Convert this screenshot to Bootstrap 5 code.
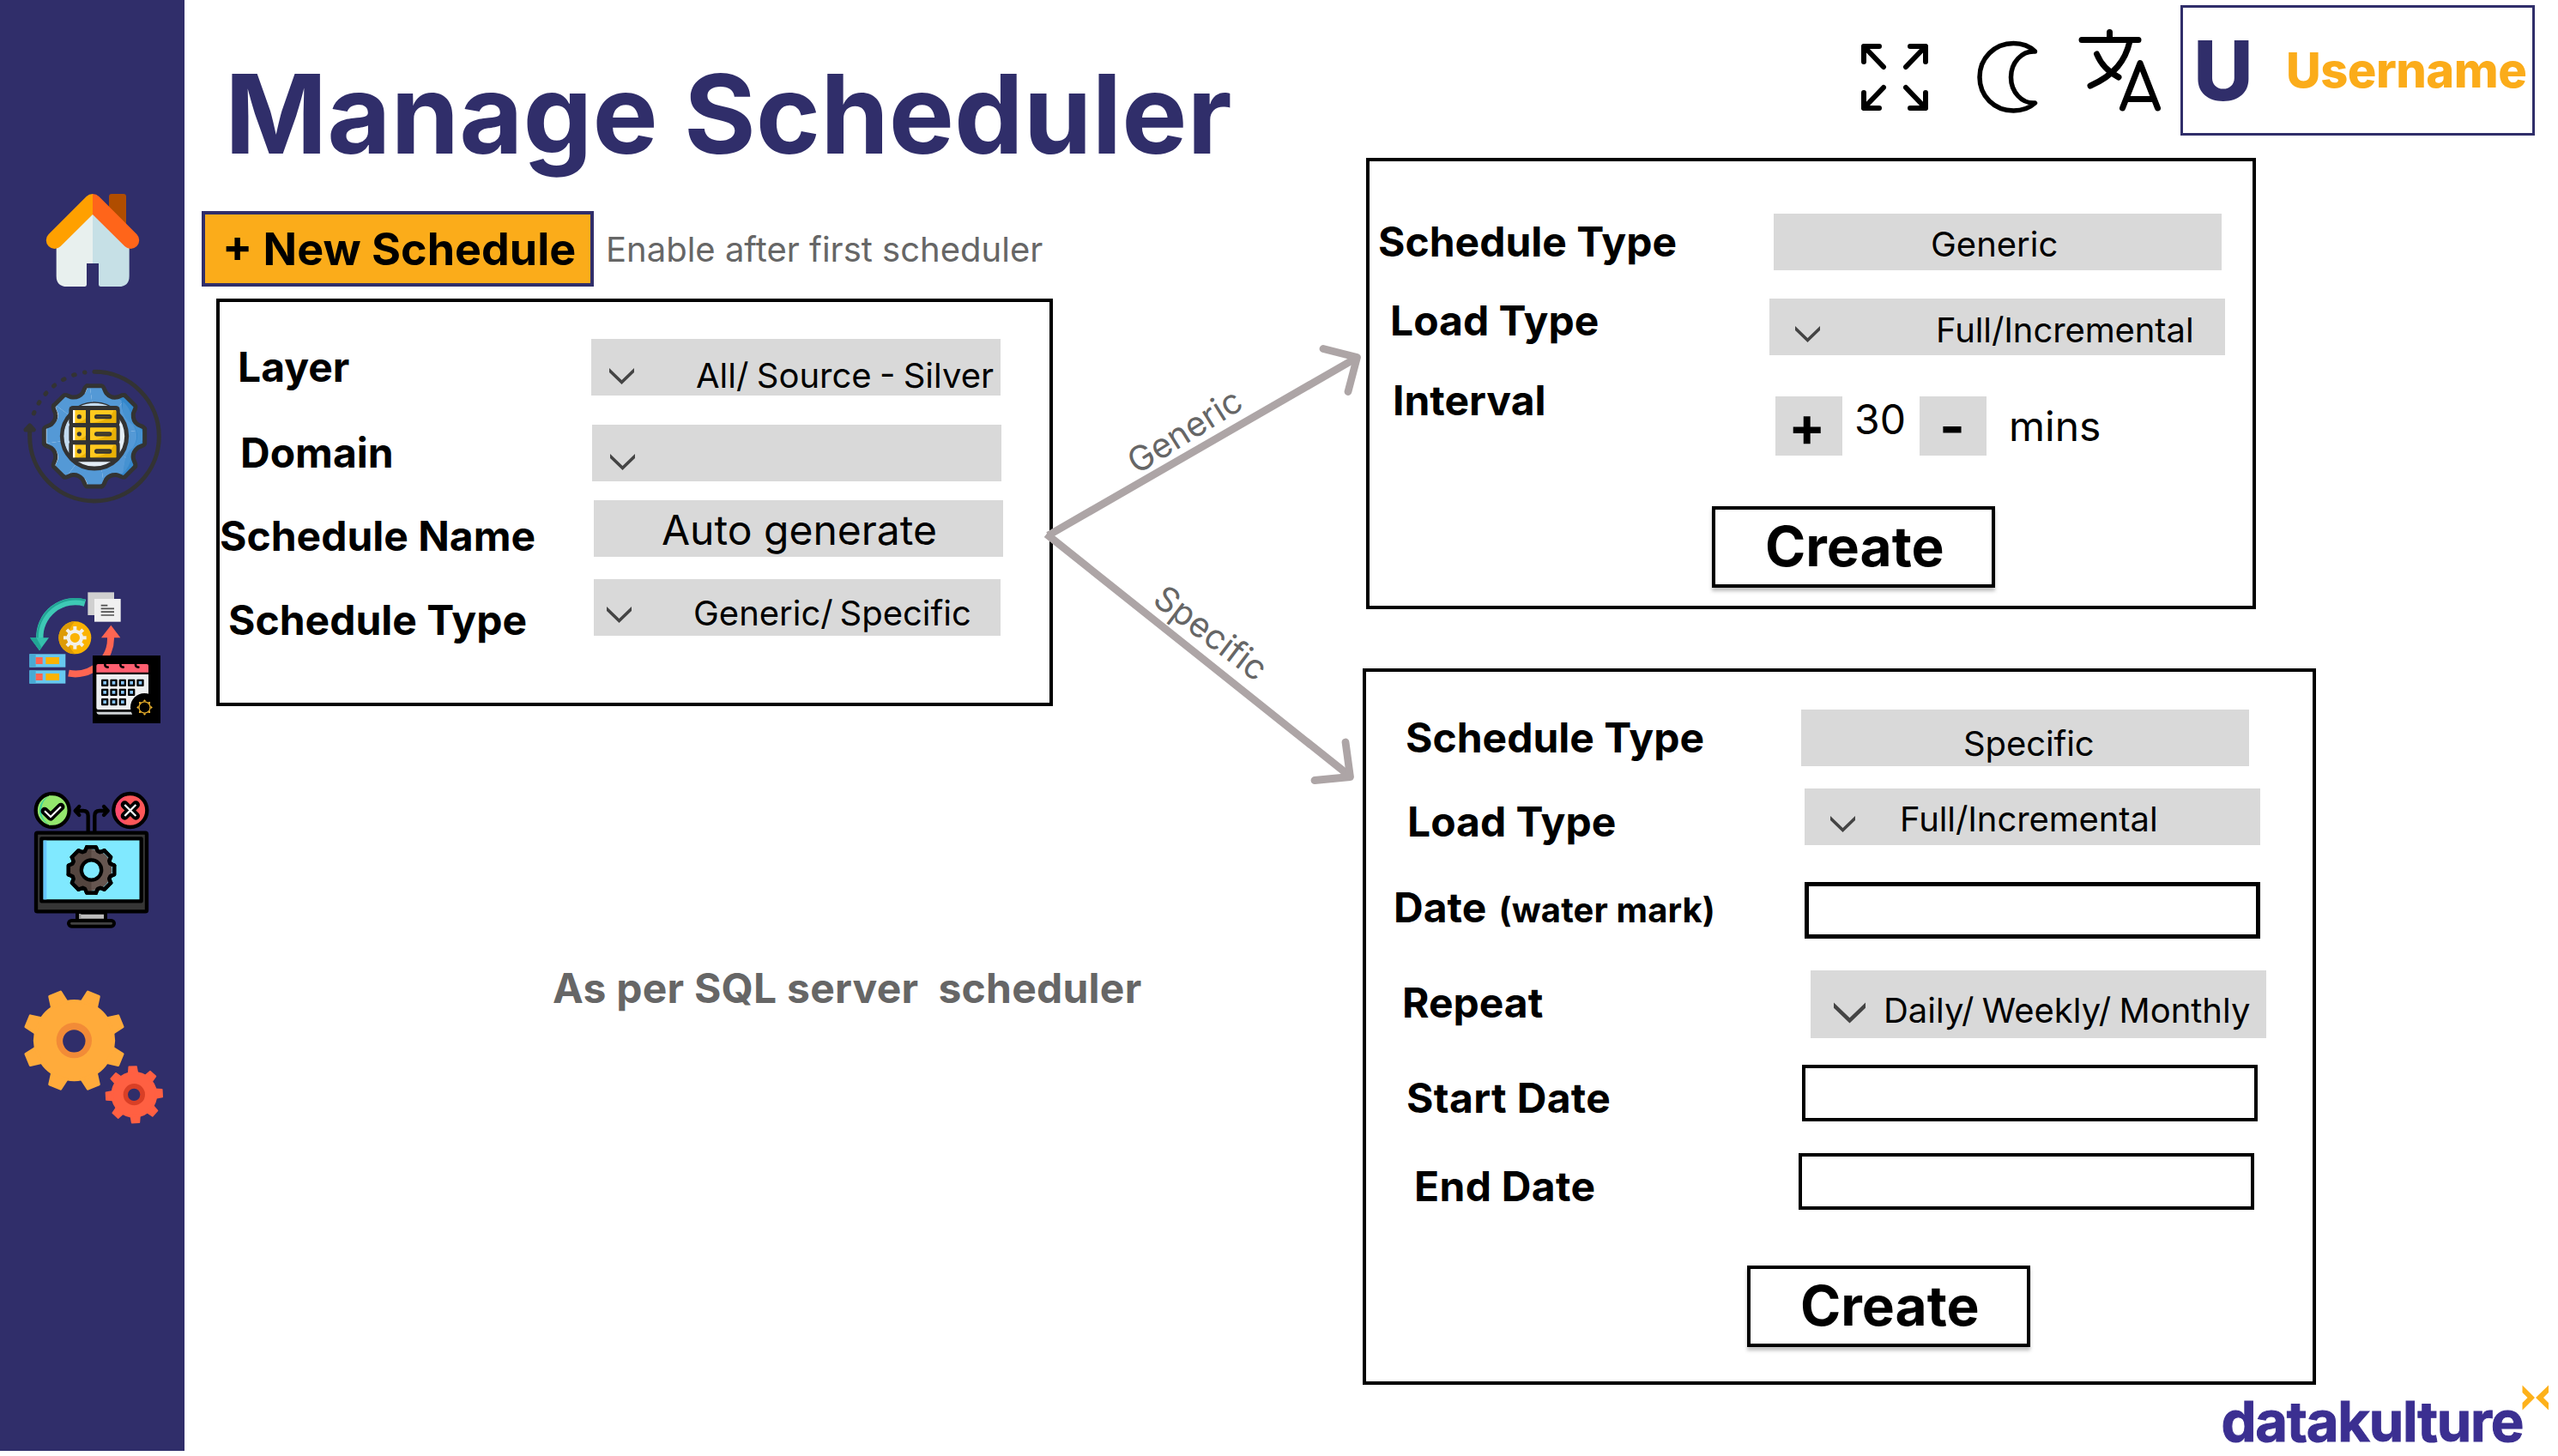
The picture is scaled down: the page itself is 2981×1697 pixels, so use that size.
<!DOCTYPE html>
<html lang="en">
<head>
<meta charset="utf-8">
<meta name="viewport" content="width=device-width, initial-scale=1">
<title>Manage Scheduler</title>
<link href="https://cdn.jsdelivr.net/npm/bootstrap@5.3.0/dist/css/bootstrap.min.css" rel="stylesheet">
<style>
:root{--navy:#302e6a;--amber:#fbac1a;--ash:#d9d9d9;--ink-soft:#666}
body{font-family:Inter,"Liberation Sans",sans-serif;color:#000;background:#fff;overflow:hidden;text-rendering:optimizeLegibility}
.shell{width:2981px;height:1697px}
svg{display:block;flex:none}

/* sidebar */
.side{width:215px;height:1691px;background:var(--navy);padding-top:220px}
.side .gap-a{margin-top:85px}.side .gap-b{margin-top:92px}.side .gap-c{margin-top:71px}.side .gap-d{margin-top:64px}

/* type sizes */
.t128{font-size:128px;line-height:129px}
.t64{font-size:64px;line-height:65px}
.t52{font-size:52px;line-height:53px}
.t48{font-size:48px;line-height:49px}
.t40{font-size:40px;line-height:41px}
.soft{color:var(--ink-soft)}

/* left column */
.col-left{width:1373px;padding-top:68px}
.page-title{color:var(--navy);padding-left:47px}
.actions{margin-top:49px;margin-left:20px}
.btn-new{width:457px;height:88px;border:4px solid var(--navy);background:var(--amber);color:#000;padding:14px 0 0 20px}
.hint{margin:24px 0 0 14px}
.note{margin:304px 0 0 429px;white-space:pre;letter-spacing:.23px}

/* right column */
.col-right{width:1393px}
.topbar{height:158px;padding-left:581px}
.ic-full{margin-top:51px}.ic-moon{margin:47px 0 0 57px}.ic-lang{margin:33px 0 0 47px}
.user{width:413px;height:152px;margin:6px 0 0 22px;border:3px solid var(--navy)}
.user-initial{font-size:96px;line-height:96px;width:108px;color:var(--navy);margin:25px 0 0 12px;font-weight:800}
.user-name{font-size:56px;line-height:56px;color:var(--amber);margin:45px 0 0 0;font-weight:800;letter-spacing:-.5px}
.brand{margin:0 0 0 990px}

/* panels */
.panel{border:4px solid #000;background:#fff}
.p-main{width:975px;height:475px;margin:14px 0 0 37px;padding-top:43px}
.p-generic{width:1037px;height:526px;margin:26px 0 0 4px;padding-top:61px}
.p-specific{width:1111px;height:835px;margin-top:69px;padding-top:44px}
.line{height:var(--h)}
.lbl{width:var(--lw);padding-left:var(--lx);margin-top:var(--ly);letter-spacing:var(--ls,0)}
.ctl{width:var(--cw);height:var(--ch,66px);background:var(--ash)}
.ctl svg{margin:var(--vy) 0 0 var(--vx)}
.ctl span{margin:var(--ty) 0 0 var(--tx);word-spacing:var(--ws,0);letter-spacing:var(--vs,0)}
.field{width:531px;height:66px;border:4px solid #000;background:#fff;border-radius:0;padding:0}
.field-strong{border-width:5px}
.step{width:78px;height:69px;background:var(--ash);border:0;padding:2px 0 0}
.btn-create{width:330px;height:95px;border:4px solid #000;background:#fff;padding:10px 0 0 58px;box-shadow:0 4px 4px rgba(0,0,0,.25)}

.a1{--h:100px;--lw:433px;--lx:21px;--ly:8px;--cw:477px;--vx:21px;--vy:34px;--tx:72px;--ty:22px;--ws:-1.9px}
.a2{--h:88px;--lw:434px;--lx:24px;--ly:8px;--cw:477px;--vx:21px;--vy:34px}
.a3{--h:92px;--lw:436px;--lx:0px;--ly:17px;--cw:477px;--tx:79px;--ty:10px}
.a4{--h:66px;--lw:436px;--lx:10px;--ly:23px;--cw:474px;--vx:15px;--vy:32px;--tx:72px;--ty:19px;--ws:-3.5px}
.b1{--h:99px;--lw:471px;--lx:10px;--ly:8px;--cw:522px;--tx:183px;--ty:15px}
.b2{--h:114px;--lw:466px;--lx:24px;--ly:1px;--cw:531px;--vx:30px;--vy:32px;--tx:135px;--ty:16px;--vs:-.1px}
.b3{--h:128px;--lw:473px;--lx:27px;--ly:-20px}
.b4{padding-left:399px}
.plus{padding-left:15px}.minus{padding-left:23px}
.count{width:76px;margin:2px 0 0 14px}
.unit{margin:10px 0 0 26px}
.c1{--h:92px;--lw:507px;--lx:46px;--ly:8px;--cw:522px;--tx:189px;--ty:19px;--vs:-.1px}
.c2{--h:109px;--lw:511px;--lx:48px;--ly:14px;--cw:531px;--vx:30px;--vy:32px;--tx:52px;--ty:15px;--vs:-.1px}
.c3{--h:103px;--lw:511px;--lx:32px;--ly:5px}
.c4{--h:110px;--lw:518px;--lx:42px;--ly:13px;--cw:531px;--ch:79px;--vx:27px;--vy:37px;--tx:21px;--ty:26px;--ws:-2px}
.c5{--h:103px;--lw:508px;--lx:47px;--ly:14px;--ls:.35px}
.c6{--h:131px;--lw:504px;--lx:56px;--ly:14px;--ls:.3px}
.c7{padding-left:444px}
.aside-text{font-size:40px;padding-left:3px;letter-spacing:.12px}

/* connectors drawn over the panels */
.links{left:1200px;top:380px}
.links text{font-size:40px;fill:var(--ink-soft)}
</style>
<script src="https://cdn.jsdelivr.net/npm/bootstrap@5.3.0/dist/js/bootstrap.bundle.min.js"></script>
</head>
<body>
<div class="shell d-flex align-items-start position-relative">

<svg width="0" height="0" class="position-absolute">
  <defs>
    <path id="cogEdge" d="M-25 -176H25C34 -176 35 -158 42 -150C50 -141 64 -134 76.5 -135.7C88 -137 98 -148 106.8 -142.1"/>
    <path id="cogFill" d="M-25 -176H25C34 -176 35 -158 42 -150C50 -141 64 -134 76.5 -135.7C88 -137 98 -148 106.8 -142.1L0 0Z"/>
    <g id="cogE4"><use href="#cogEdge"/><use href="#cogEdge" transform="rotate(45)"/><use href="#cogEdge" transform="rotate(90)"/><use href="#cogEdge" transform="rotate(135)"/></g>
    <g id="cogF4"><use href="#cogFill"/><use href="#cogFill" transform="rotate(45)"/><use href="#cogFill" transform="rotate(90)"/><use href="#cogFill" transform="rotate(135)"/></g>
    <g id="cogAll"><circle r="120"/><use href="#cogF4"/><use href="#cogF4" transform="rotate(180)"/></g>
    <clipPath id="cogClip"><circle r="120"/><use href="#cogFill"/><use href="#cogFill" transform="rotate(45)"/><use href="#cogFill" transform="rotate(90)"/><use href="#cogFill" transform="rotate(135)"/><use href="#cogFill" transform="rotate(180)"/><use href="#cogFill" transform="rotate(225)"/><use href="#cogFill" transform="rotate(270)"/><use href="#cogFill" transform="rotate(315)"/></clipPath>
    <path id="mEdge" d="M-16 -80H16L22 -66L30 -62L45.3 -67.9"/>
    <g id="mE4"><use href="#mEdge"/><use href="#mEdge" transform="rotate(45)"/><use href="#mEdge" transform="rotate(90)"/><use href="#mEdge" transform="rotate(135)"/></g>
    <path id="bTooth" d="M-21 -175H21L28 -136H-28Z"/>
    <g id="bT4"><use href="#bTooth"/><use href="#bTooth" transform="rotate(45)"/><use href="#bTooth" transform="rotate(90)"/><use href="#bTooth" transform="rotate(135)"/></g>
    <path id="sTooth" d="M-13 -98H13L16 -74H-16Z"/>
    <g id="sT4"><use href="#sTooth"/><use href="#sTooth" transform="rotate(45)"/><use href="#sTooth" transform="rotate(90)"/><use href="#sTooth" transform="rotate(135)"/></g>
    <path id="wTooth" d="M-6 -40H6V-25H-6Z"/>
    <path id="ray" d="M-6 -21L0 -28L6 -21Z"/>
    <symbol id="chev" viewBox="0 0 29 19"><path fill="#444" d="M0 0L14.5 14L29 0V5L14.5 19L0 5Z"/></symbol>
    <g id="cell"><rect width="25" height="25" rx="3"/><rect x="7" y="7" width="11" height="11" fill="#86c5fb"/></g>
    <g id="rack"><rect width="126" height="46" fill="#67c8ee"/><rect width="22" height="46" fill="#49aad4"/><rect x="22" y="11" width="24" height="24" fill="#fe6552"/><rect x="57" y="11" width="47" height="24" fill="#fbb302"/></g>
    <g id="blade"><rect x="241" y="819" width="178" height="72" rx="14" fill="#333"/><rect x="255" y="834" width="45" height="45" fill="#ffc91f"/><path d="M255 834h7v45h-7z" fill="#fff"/><path d="M300 862V879H262Q285 878 300 862Z" fill="#e9b106"/><rect x="315" y="834" width="91" height="45" rx="2" fill="#ffc91f"/><path d="M406 838V879H315Q385 873 398 834Z" fill="#e9b106"/><circle cx="277" cy="857" r="8" fill="#333"/><rect x="330" y="849" width="61" height="16" rx="8" fill="#333"/><path d="M338 857H383" stroke="#7d6314" stroke-width="2"/></g>
  </defs>
</svg>

<nav class="side d-flex flex-column flex-shrink-0">
  <a href="#" aria-label="Home">
    <svg width="215" height="120" viewBox="0 60 645 360">
      <rect x="381" y="78" width="60" height="130" rx="9" fill="#b04d00"/>
      <path d="M324 140L197 260V365Q197 402 234 402H296Q303 402 303 395V321H324Z" fill="#e8f0ee"/>
      <path d="M324 140L452 260V365Q452 402 415 402H352Q345 402 345 395V321H324Z" fill="#c6e0e6"/>
      <path d="M324 78Q311 78 302 87L170 219A29 29 0 0 0 212 261L324 150Z" fill="#ffa000"/>
      <path d="M324 78Q337 78 346 87L478 219A29 29 0 0 1 436 261L324 150Z" fill="#ff651a"/>
    </svg>
  </a>
  <a href="#" class="gap-a" aria-label="Data services">
    <svg width="215" height="168" viewBox="0 675 645 504">
      <g fill="none" stroke="#333" stroke-width="15" stroke-linecap="round" stroke-linejoin="round">
        <path d="M330 700A226 226 0 1 1 104 926V890"/>
        <path d="M90 903L104 888L118 903Z" fill="#333"/>
        <path d="M118 846A226 226 0 0 1 297 702" stroke-dasharray="5 34.9"/>
      </g>
      <g transform="translate(330 925)">
        <g clip-path="url(#cogClip)">
          <rect x="-190" y="-190" width="380" height="380" fill="#fff"/>
          <use href="#cogAll" x="9" fill="#5499d6"/>
          <path d="M15 -190C25 -150 70 -140 95 -125C95 -80 110 -55 135 -40Q160 0 135 40C105 60 108 90 100 130C60 140 35 140 20 190H190V-190Z" fill="#3487cb"/>
          <path d="M100 -120C95 -80 105 -55 135 -40Q165 0 135 40C105 60 108 90 100 130C140 90 120 60 150 40Q190 0 150 -40C125 -60 135 -90 100 -120Z" fill="#5499d6" opacity=".6"/>
        </g>
        <g fill="none" stroke="#333" stroke-width="15" stroke-linejoin="round" stroke-linecap="round"><use href="#cogE4"/><use href="#cogE4" transform="rotate(180)"/></g>
        <circle r="113" fill="#e3edf6" stroke="#333" stroke-width="15"/>
        <path d="M-88 -60A106 106 0 0 0 -88 60L-80 40V-60Z" fill="#c3dbf0"/>
        <path d="M-52 -101Q0 -124 52 -101Q0 -112 -52 -101Z" fill="#c3dbf0" stroke="#c3dbf0" stroke-width="6"/>
      </g>
      <use href="#blade"/><use href="#blade" y="60.5"/><use href="#blade" y="121"/>
      <path d="M250 1008H410" stroke="#333" stroke-width="14"/>
    </svg>
  </a>
  <a href="#" class="gap-b" aria-label="Scheduler">
    <svg width="215" height="164" viewBox="0 75 645 492">
      <path d="M297 128A124 124 0 0 0 139 252" fill="none" stroke="#3ec9b5" stroke-width="25"/>
      <path d="M297 119A133 133 0 0 0 131 252" fill="none" stroke="#22a595" stroke-width="7"/>
      <path d="M105 250H171L138 295Z" fill="#35bfac"/><path d="M105 250H127L146 284L138 295Z" fill="#22a595"/>
      <circle cx="262" cy="250" r="57" fill="#fbb302"/>
      <path d="M262 193A57 57 0 0 0 262 307A80 80 0 0 1 262 193Z" fill="#dd9b06"/>
      <g transform="translate(262 250)" fill="#f2f0ea">
        <circle r="23" fill="none" stroke="#f2f0ea" stroke-width="12"/>
        <use href="#wTooth"/><use href="#wTooth" transform="rotate(45)"/><use href="#wTooth" transform="rotate(90)"/><use href="#wTooth" transform="rotate(135)"/><use href="#wTooth" transform="rotate(180)"/><use href="#wTooth" transform="rotate(225)"/><use href="#wTooth" transform="rotate(270)"/><use href="#wTooth" transform="rotate(315)"/>
      </g>
      <rect x="307" y="91" width="92" height="80" fill="#d0d0d0"/><rect x="330" y="114" width="92" height="80" fill="#f0f0f0"/>
      <path d="M353 137H376M353 148H399M353 159.500H399M353 171H399" stroke="#505050" stroke-width="5"/>
      <path d="M240 374A124 124 0 0 0 387 248" fill="none" stroke="#fe6552" stroke-width="24"/>
      <path d="M354 250H421L388 206Z" fill="#fe6552"/>
      <use href="#rack" x="103" y="307"/><use href="#rack" x="103" y="364"/>
      <rect x="324" y="312" width="237" height="237"/>
      <path d="M337 371V348Q337 342 343 342H513Q519 342 519 348V371Z" fill="#ff5f70"/>
      <path d="M337 378H519V501H343Q337 501 337 495Z" fill="#eceff1"/>
      <path d="M337 509H462V518H345Q339 518 337 509Z" fill="#cfd3d6"/>
      <path d="M367 341Q366 353 377 353M421 341Q420 353 431 353M474 341Q473 353 484 353" fill="none" stroke="#000" stroke-width="8" stroke-linecap="round"/>
      <use href="#cell" x="354" y="395"/><use href="#cell" x="385" y="395"/><use href="#cell" x="416" y="395"/><use href="#cell" x="447" y="395"/><use href="#cell" x="478" y="395"/>
      <use href="#cell" x="354" y="428"/><use href="#cell" x="385" y="428"/><use href="#cell" x="416" y="428"/><use href="#cell" x="447" y="428"/>
      <use href="#cell" x="354" y="462"/><use href="#cell" x="385" y="462"/><use href="#cell" x="416" y="462"/>
      <circle cx="505" cy="493" r="49"/>
      <g transform="translate(505.500 493.500)" fill="#f6b92f">
        <circle r="19.500" fill="none" stroke="#f6b92f" stroke-width="3.500"/>
        <use href="#ray"/><use href="#ray" transform="rotate(45)"/><use href="#ray" transform="rotate(90)"/><use href="#ray" transform="rotate(135)"/><use href="#ray" transform="rotate(180)"/><use href="#ray" transform="rotate(225)"/><use href="#ray" transform="rotate(270)"/><use href="#ray" transform="rotate(315)"/>
      </g>
    </svg>
  </a>
  <a href="#" class="gap-c" aria-label="Job status">
    <svg width="215" height="166" viewBox="0 780 645 498">
      <g stroke="#000" stroke-width="13" stroke-linecap="round" stroke-linejoin="round">
        <circle cx="183.500" cy="853.500" r="58.500" fill="#94e76d"/>
        <path d="M183 802A52 52 0 0 0 183 905Q145 895 145 853Q145 812 183 802Z" fill="#3bd39a" stroke="none"/>
        <path d="M172 802A70 70 0 0 0 172 905L200 900V806Z" fill="#94e76d" stroke="none"/>
        <circle cx="455.500" cy="853.500" r="58.500" fill="#ff5759"/>
        <path d="M440 804A52 52 0 0 0 440 903Q400 853 440 804Z" fill="#ff4a6e" stroke="none"/>
        <path d="M156 856L177 876L213 841" fill="none" stroke-width="27"/>
        <path d="M156 856L177 876L213 841" fill="none" stroke="#fff" stroke-width="6" stroke-linecap="butt" stroke-linejoin="miter"/>
        <path d="M436 834L475 873M475 834L436 873" fill="none" stroke-width="28"/>
        <path d="M436 834L475 873M475 834L436 873" stroke="#fff" stroke-width="7" stroke-linecap="butt"/>
        <path d="M308 928V872Q308 855 291 855H264M277 840L263 855L277 870M331 928V872Q331 855 348 855H376M363 840L377 855L363 870" fill="none"/>
        <rect x="126" y="932" width="387" height="275" rx="5" fill="#363636"/>
        <rect x="145" y="952" width="349" height="219" fill="#80e9ff"/>
        <path d="M152 959H163V1165H152Z" fill="#67c6ff" stroke="none"/>
        <g transform="translate(319.500 1062)">
          <circle r="72" fill="#665650" stroke="none"/>
          <g fill="#665650"><use href="#mE4"/><use href="#mE4" transform="rotate(180)"/></g>
          <circle r="66" fill="#665650" stroke="none"/>
          <path d="M0 -78V78A78 78 0 0 1 -16 74L-45 62L-70 30L-78 12V-12L-66 -24L-64 -45L-45 -64L-16 -76Z" fill="#54453f" stroke="none"/>
          <g fill="none"><use href="#mE4"/><use href="#mE4" transform="rotate(180)"/></g>
          <circle r="35" fill="#80e9ff"/>
        </g>
        <path d="M270 1211H369V1238H270Z" fill="#bdbdbd" stroke-width="12"/>
        <path d="M276 1215H283V1232H276Z" fill="#9a9a9a" stroke="none"/>
        <rect x="240" y="1239" width="159" height="20" rx="10" fill="#424242" stroke-width="12"/>
      </g>
    </svg>
  </a>
  <a href="#" class="gap-d" aria-label="Settings">
    <svg width="215" height="164" viewBox="0 150 645 492">
      <g transform="translate(259.500 338) rotate(22.500)" fill="#ffab3b" stroke="#ffab3b" stroke-width="9" stroke-linejoin="round"><circle r="138"/><use href="#bT4"/><use href="#bT4" transform="rotate(180)"/></g>
      <circle cx="259" cy="338" r="62" fill="#f28b37"/><circle cx="259" cy="340" r="39.500" fill="#302e6a"/>
      <g transform="translate(469 527.500) rotate(-3)" fill="#ff6042" stroke="#ff6042" stroke-width="5" stroke-linejoin="round"><circle r="78"/><use href="#sT4"/><use href="#sT4" transform="rotate(180)"/></g>
      <circle cx="469" cy="527" r="38" fill="#d93f26"/><circle cx="468.500" cy="527.500" r="21.500" fill="#302e6a"/>
    </svg>
  </a>
</nav>

<main class="d-flex align-items-start">
  <section class="col-left flex-shrink-0">
    <h1 class="page-title t128 fw-bold m-0 text-nowrap">Manage Scheduler</h1>
    <div class="actions d-flex align-items-start">
      <button class="btn-new d-flex align-items-start t52 fw-bold text-nowrap" type="button">+ New Schedule</button>
      <span class="hint t40 soft text-nowrap">Enable after first scheduler</span>
    </div>
    <form class="panel p-main">
      <div class="line d-flex align-items-start a1"><label class="lbl t48 fw-bold text-nowrap">Layer</label><div class="ctl d-flex align-items-start"><svg width="29" height="19"><use href="#chev"/></svg><span class="t40 text-nowrap">All/ Source - Silver</span></div></div>
      <div class="line d-flex align-items-start a2"><label class="lbl t48 fw-bold text-nowrap">Domain</label><div class="ctl d-flex align-items-start"><svg width="29" height="19"><use href="#chev"/></svg></div></div>
      <div class="line d-flex align-items-start a3"><label class="lbl t48 fw-bold text-nowrap">Schedule Name</label><div class="ctl d-flex align-items-start"><span class="t48 text-nowrap">Auto generate</span></div></div>
      <div class="line d-flex align-items-start a4"><label class="lbl t48 fw-bold text-nowrap">Schedule Type</label><div class="ctl d-flex align-items-start"><svg width="29" height="19"><use href="#chev"/></svg><span class="t40 text-nowrap">Generic/ Specific</span></div></div>
    </form>
    <p class="note t48 fw-bold soft mb-0">As per SQL server  scheduler</p>
  </section>

  <section class="col-right flex-shrink-0">
    <header class="topbar d-flex align-items-start">
      <svg class="ic-full" width="78" height="78" viewBox="0 0 78 78" fill="none" stroke="#000" stroke-width="6" stroke-linecap="round" stroke-linejoin="round"><path d="M3 21V3H21M3 3L26 27M75 21V3H57M75 3L52 27M3 57V75H21M3 75L26 51M75 57V75H57M75 75L52 51"/></svg>
      <svg class="ic-moon" width="71" height="86" viewBox="0 0 71 86" fill="none" stroke="#000" stroke-width="5.500" stroke-linejoin="round"><path d="M67.500 13C61 6.500 52 3.500 42.500 3.500C20 3.500 3 21 3 43C3 65 20 82 42.500 82C52 82 61 79 67.500 73C52 74 39.500 60 39.500 43C39.500 26 52 12 67.500 13Z"/></svg>
      <svg class="ic-lang" width="97" height="98" viewBox="0 0 97 98" fill="none" stroke="#000" stroke-width="7" stroke-linecap="round" stroke-linejoin="round"><path d="M4 13.500H70M36.500 4.500V13M60 15C55 37 43 54 14 67M21.500 30Q29 48 47 57M51.500 93L72 40.500L92.500 93M56 82.500H87"/></svg>
      <div class="user d-flex align-items-start"><span class="user-initial">U</span><span class="user-name">Username</span></div>
    </header>
    <form class="panel p-generic">
      <div class="line d-flex align-items-start b1"><label class="lbl t48 fw-bold text-nowrap">Schedule Type</label><div class="ctl d-flex align-items-start"><span class="t40 text-nowrap">Generic</span></div></div>
      <div class="line d-flex align-items-start b2"><label class="lbl t48 fw-bold text-nowrap">Load Type</label><div class="ctl d-flex align-items-start"><svg width="29" height="19"><use href="#chev"/></svg><span class="t40 text-nowrap">Full/Incremental</span></div></div>
      <div class="line d-flex align-items-start b3"><label class="lbl t48 fw-bold text-nowrap">Interval</label><button type="button" class="step plus d-flex align-items-start t64 fw-bold">+</button><span class="count t48">30</span><button type="button" class="step minus d-flex align-items-start t64 fw-bold">-</button><span class="unit t48">mins</span></div>
      <div class="b4"><button type="button" class="btn-create d-flex align-items-start t64 fw-bold">Create</button></div>
    </form>
    <form class="panel p-specific">
      <div class="line d-flex align-items-start c1"><label class="lbl t48 fw-bold text-nowrap">Schedule Type</label><div class="ctl d-flex align-items-start"><span class="t40 text-nowrap">Specific</span></div></div>
      <div class="line d-flex align-items-start c2"><label class="lbl t48 fw-bold text-nowrap">Load Type</label><div class="ctl d-flex align-items-start"><svg width="29" height="19"><use href="#chev"/></svg><span class="t40 text-nowrap">Full/Incremental</span></div></div>
      <div class="line d-flex align-items-start c3"><label class="lbl t48 fw-bold text-nowrap">Date <span class="aside-text">(water mark)</span></label><input class="field field-strong" type="text" aria-label="Date"></div>
      <div class="line d-flex align-items-start c4"><label class="lbl t48 fw-bold text-nowrap">Repeat</label><div class="ctl d-flex align-items-start"><svg width="37" height="25"><use href="#chev"/></svg><span class="t40 text-nowrap">Daily/ Weekly/ Monthly</span></div></div>
      <div class="line d-flex align-items-start c5"><label class="lbl t48 fw-bold text-nowrap">Start Date</label><input class="field" type="text" aria-label="Start date"></div>
      <div class="line d-flex align-items-start c6"><label class="lbl t48 fw-bold text-nowrap">End Date</label><input class="field" type="text" aria-label="End date"></div>
      <div class="c7"><button type="button" class="btn-create d-flex align-items-start t64 fw-bold">Create</button></div>
    </form>
    <svg class="brand" width="403" height="83" viewBox="2578 1614 403 83" role="img" aria-label="datakulture">
      <text x="2588.500" y="1680" font-size="65" font-weight="700" fill="#3b2f91" stroke="#3b2f91" stroke-width="1" textLength="353" lengthAdjust="spacing">datakulture</text>
      <path d="M2939.500 1614.500L2954 1629L2939.500 1643.500V1635L2945.500 1629L2939.500 1623ZM2970 1614.500L2955 1629L2970 1643.500V1635L2964 1629L2970 1623Z" fill="#fdb11b"/>
    </svg>
  </section>
</main>

<svg class="links position-absolute" width="420" height="560" viewBox="0 0 420 560" fill="none" stroke="#ada5a6" stroke-width="8.800">
  <path d="M21.500 244L381 37M19.500 242.500L373 524.500"/>
  <path d="M342 26.500L381.500 36.500L371 76.500M368 485L373.500 525.500L332 529.500" stroke-linecap="round" stroke-linejoin="round"/>
  <text stroke="none" transform="translate(125 173.500) rotate(-32)">Generic</text>
  <text stroke="none" transform="translate(141.500 322.500) rotate(37.200)">Specific</text>
</svg>
</div>
</body>
</html>
